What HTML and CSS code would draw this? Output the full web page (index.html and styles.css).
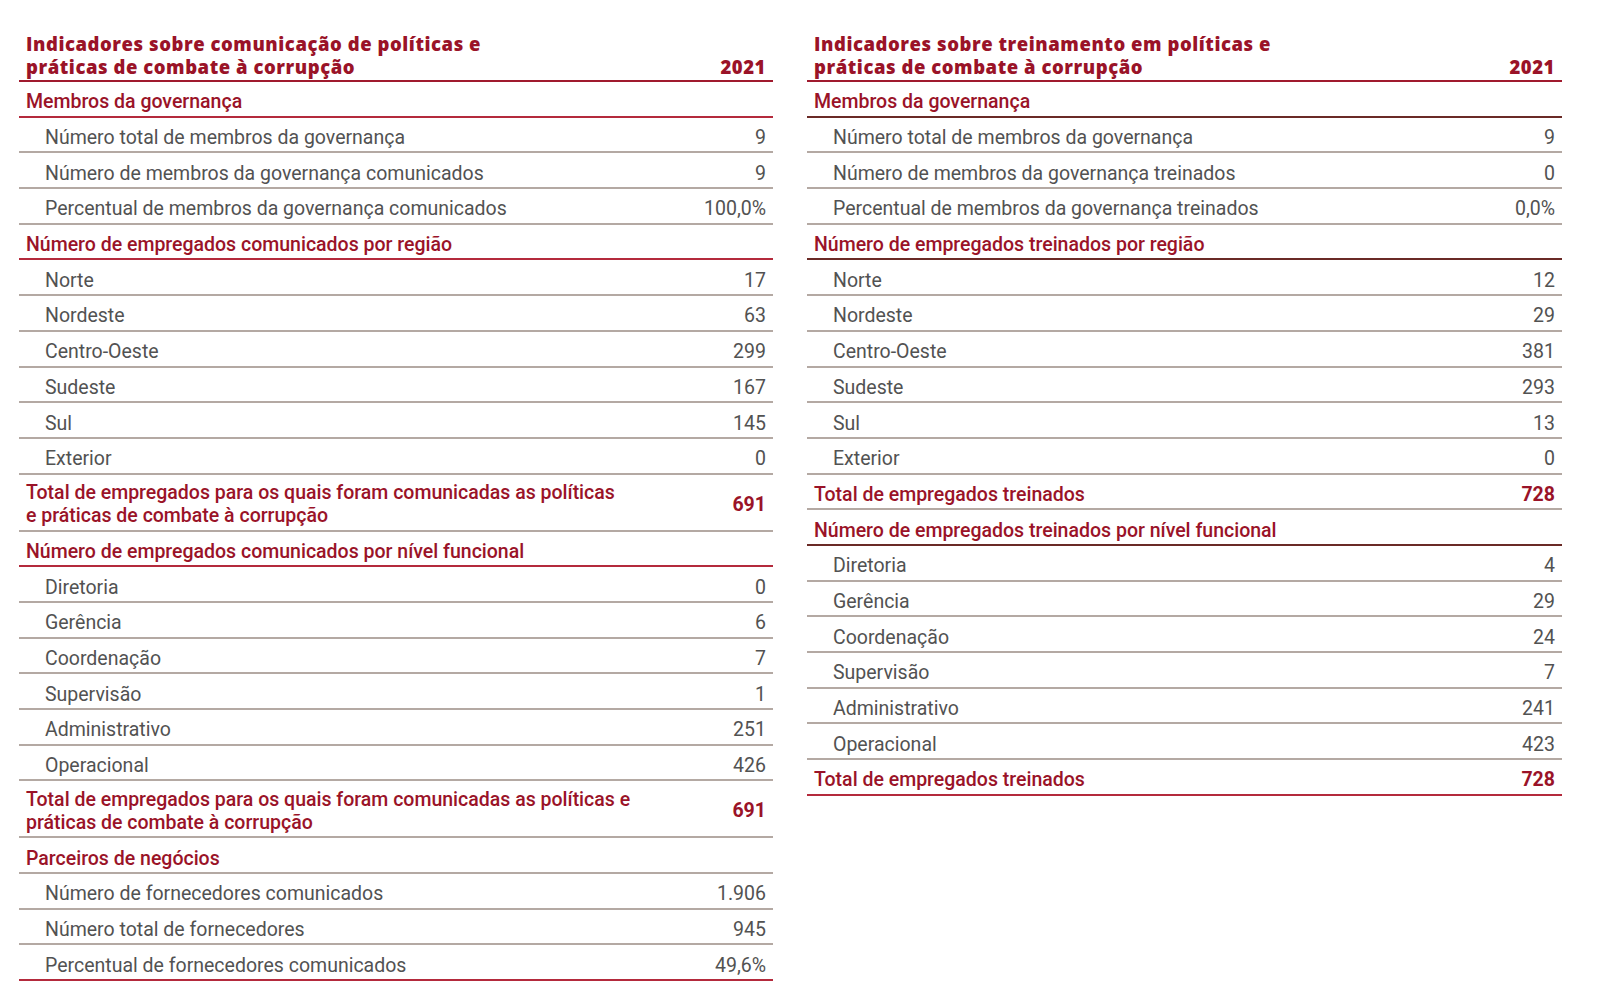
FILE: index.html
```html
<!DOCTYPE html>
<html lang="pt-BR">
<head>
<meta charset="utf-8">
<title>Indicadores de combate à corrupção</title>
<link rel="stylesheet" href="styles.css">
</head>
<body>
<main class="page">
  <section class="table">
    <div class="head">
      <div class="title">Indicadores sobre comunicação de políticas e<br>práticas de combate à corrupção</div>
      <div class="year">2021</div>
    </div>
    <div class="row section"><span>Membros da governança</span></div>
    <div class="row"><span>Número total de membros da governança</span><span>9</span></div>
    <div class="row"><span>Número de membros da governança comunicados</span><span>9</span></div>
    <div class="row"><span>Percentual de membros da governança comunicados</span><span>100,0%</span></div>
    <div class="row section"><span>Número de empregados comunicados por região</span></div>
    <div class="row"><span>Norte</span><span>17</span></div>
    <div class="row"><span>Nordeste</span><span>63</span></div>
    <div class="row"><span>Centro-Oeste</span><span>299</span></div>
    <div class="row"><span>Sudeste</span><span>167</span></div>
    <div class="row"><span>Sul</span><span>145</span></div>
    <div class="row"><span>Exterior</span><span>0</span></div>
    <div class="row total tall"><span>Total de empregados para os quais foram comunicadas as políticas<br>e práticas de combate à corrupção</span><span>691</span></div>
    <div class="row section"><span>Número de empregados comunicados por nível funcional</span></div>
    <div class="row"><span>Diretoria</span><span>0</span></div>
    <div class="row"><span>Gerência</span><span>6</span></div>
    <div class="row"><span>Coordenação</span><span>7</span></div>
    <div class="row"><span>Supervisão</span><span>1</span></div>
    <div class="row"><span>Administrativo</span><span>251</span></div>
    <div class="row"><span>Operacional</span><span>426</span></div>
    <div class="row total tall"><span>Total de empregados para os quais foram comunicadas as políticas e<br>práticas de combate à corrupção</span><span>691</span></div>
    <div class="row section plain"><span>Parceiros de negócios</span></div>
    <div class="row"><span>Número de fornecedores comunicados</span><span>1.906</span></div>
    <div class="row"><span>Número total de fornecedores</span><span>945</span></div>
    <div class="row last"><span>Percentual de fornecedores comunicados</span><span>49,6%</span></div>
  </section>

  <section class="table right">
    <div class="head">
      <div class="title">Indicadores sobre treinamento em políticas e<br>práticas de combate à corrupção</div>
      <div class="year">2021</div>
    </div>
    <div class="row section"><span>Membros da governança</span></div>
    <div class="row"><span>Número total de membros da governança</span><span>9</span></div>
    <div class="row"><span>Número de membros da governança treinados</span><span>0</span></div>
    <div class="row"><span>Percentual de membros da governança treinados</span><span>0,0%</span></div>
    <div class="row section"><span>Número de empregados treinados por região</span></div>
    <div class="row"><span>Norte</span><span>12</span></div>
    <div class="row"><span>Nordeste</span><span>29</span></div>
    <div class="row"><span>Centro-Oeste</span><span>381</span></div>
    <div class="row"><span>Sudeste</span><span>293</span></div>
    <div class="row"><span>Sul</span><span>13</span></div>
    <div class="row"><span>Exterior</span><span>0</span></div>
    <div class="row total"><span>Total de empregados treinados</span><span>728</span></div>
    <div class="row section"><span>Número de empregados treinados por nível funcional</span></div>
    <div class="row"><span>Diretoria</span><span>4</span></div>
    <div class="row"><span>Gerência</span><span>29</span></div>
    <div class="row"><span>Coordenação</span><span>24</span></div>
    <div class="row"><span>Supervisão</span><span>7</span></div>
    <div class="row"><span>Administrativo</span><span>241</span></div>
    <div class="row"><span>Operacional</span><span>423</span></div>
    <div class="row total last"><span>Total de empregados treinados</span><span>728</span></div>
  </section>
</main>
</body>
</html>
```

FILE: styles.css
```css
html, body {
  margin: 0;
  padding: 0;
  background: #ffffff;
}

.page {
  display: flex;
  align-items: flex-start;
  gap: 34px;
  padding: 32px 0 0 19px;
  font-family: Roboto, "Liberation Sans", sans-serif;
}

.table {
  width: 754px;
  display: flex;
  flex-direction: column;
}

.table.right {
  width: 755px;
}

.head {
  display: flex;
  justify-content: space-between;
  align-items: flex-end;
  padding: 0 7px 2px 7px;
  border-bottom: 2px solid #a01a2e;
  color: #9a1328;
  font-family: "Open Sans", "Noto Sans", sans-serif;
  font-weight: 800;
  font-size: 18.5px;
  line-height: 23px;
  letter-spacing: 0.55px;
}

.row {
  box-sizing: border-box;
  height: 35.7px;
  display: flex;
  justify-content: space-between;
  align-items: center;
  padding: 6px 7px 0 26px;
  border-bottom: 2px solid #b4a9a3;
  color: #525252;
  font-size: 19.5px;
  line-height: 23px;
}

.row.section {
  padding-left: 7px;
  color: #9a1328;
  font-weight: 500;
  border-bottom-color: #b42a3c;
}

.right .row.section {
  border-bottom-color: #6a2a26;
}

.row.section.plain {
  border-bottom-color: #b4a9a3;
}

.row.total {
  padding-left: 7px;
  color: #9a1328;
  font-weight: 500;
}

.row.total span:last-child {
  font-weight: 700;
}

.row.tall {
  height: 57px;
  padding-top: 4px;
}

.row.last {
  border-bottom-color: #b42a3c;
}
```
